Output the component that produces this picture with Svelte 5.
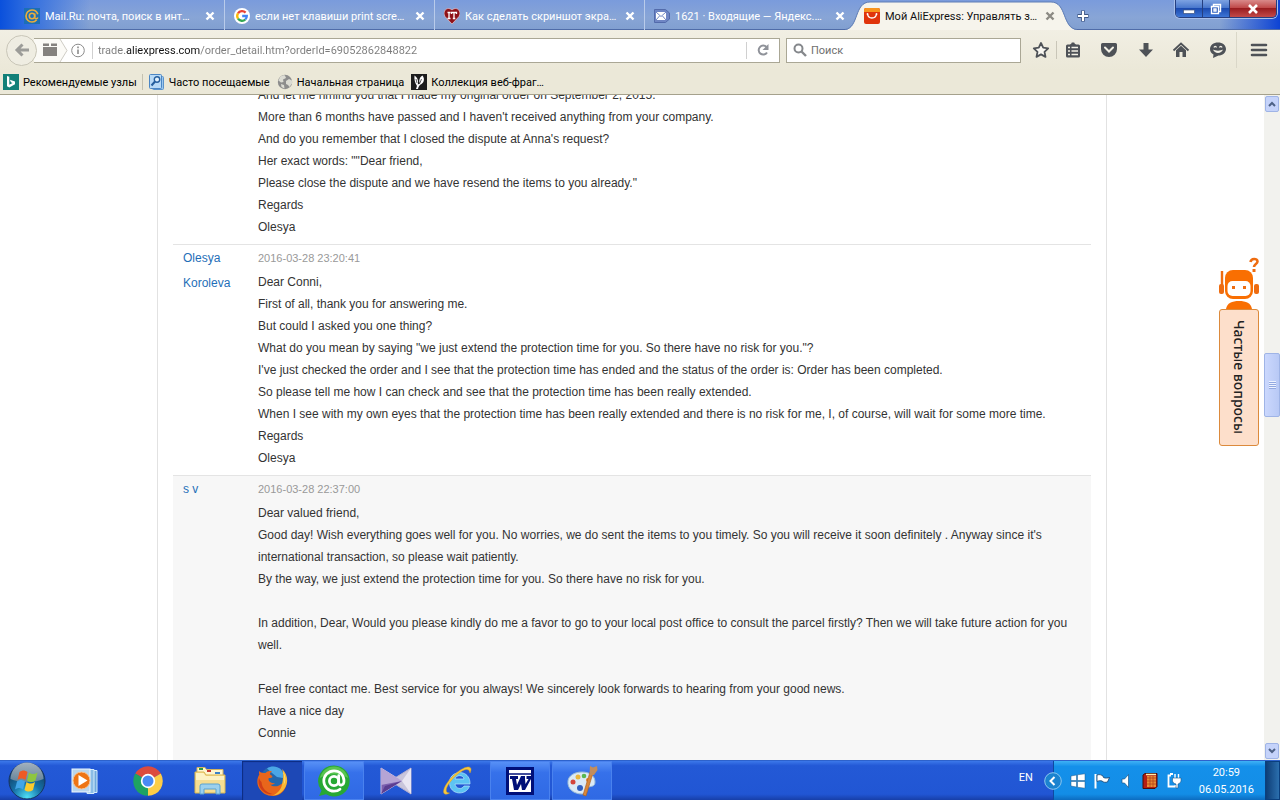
<script>
  const tabs = [
    { icon: 'mail', title: 'Mail.Ru: почта, поиск в инт…' },
    { icon: 'google', title: 'если нет клавиши print scre…' },
    { icon: 'it', title: 'Как сделать скриншот экра…' },
    { icon: 'yandex', title: '1621 · Входящие — Яндекс.…' },
    { icon: 'ali', title: 'Мой AliExpress: Управлять з…', active: true }
  ];

  const bookmarks = [
    { icon: 'bing', title: 'Рекомендуемые узлы' },
    { icon: 'folder', title: 'Часто посещаемые' },
    { icon: 'globe', title: 'Начальная страница' },
    { icon: 'leaf', title: 'Коллекция веб-фраг…' }
  ];

  const tools = ['star', 'list', 'pocket', 'download', 'home', 'chat', 'menu'];

  const messages = [
    {
      author: '',
      time: '',
      lines: [
        'And let me rimind you that I made my original order on September 2, 2015.',
        "More than 6 months have passed and I haven't received anything from your company.",
        "And do you remember that I closed the dispute at Anna's request?",
        'Her exact words: ""Dear friend,',
        'Please close the dispute and we have resend the items to you already."',
        'Regards',
        'Olesya'
      ]
    },
    {
      author: 'Olesya Koroleva',
      time: '2016-03-28 23:20:41',
      lines: [
        'Dear Conni,',
        'First of all, thank you for answering me.',
        'But could I asked you one thing?',
        'What do you mean by saying "we just extend the protection time for you. So there have no risk for you."?',
        "I've just checked the order and I see that the protection time has ended and the status of the order is: Order has been completed.",
        'So please tell me how I can check and see that the protection time has been really extended.',
        'When I see with my own eyes that the protection time has been really extended and there is no risk for me, I, of course, will wait for some more time.',
        'Regards',
        'Olesya'
      ]
    },
    {
      author: 's v',
      time: '2016-03-28 22:37:00',
      seller: true,
      lines: [
        'Dear valued friend,',
        "Good day! Wish everything goes well for you. No worries, we do sent the items to you timely. So you will receive it soon definitely . Anyway since it's international transaction, so please wait patiently.",
        'By the way, we just extend the protection time for you. So there have no risk for you.',
        '',
        'In addition, Dear, Would you please kindly do me a favor to go to your local post office to consult the parcel firstly? Then we will take future action for you well.',
        '',
        'Feel free contact me. Best service for you always! We sincerely look forwards to hearing from your good news.',
        'Have a nice day',
        'Connie'
      ]
    }
  ];

  const apps = [
    { icon: 'wmp', label: 'Media Player' },
    { icon: 'chrome', label: 'Chrome' },
    { icon: 'explorer', label: 'Explorer' },
    { icon: 'firefox', label: 'Firefox', state: 'current' },
    { icon: 'agent', label: 'Agent', state: 'open' },
    { icon: 'km', label: 'KMPlayer' },
    { icon: 'ie', label: 'Internet Explorer' },
    { icon: 'word', label: 'Word', state: 'open' },
    { icon: 'paint', label: 'Paint', state: 'open' }
  ];

  let url = $state('trade.aliexpress.com/order_detail.htm?orderId=69052862848822');
  let query = $state('');
</script>

{#snippet favicon(name)}
  <svg class="fav" viewBox="0 0 16 16" aria-hidden="true">
    {#if name === 'mail'}
      <rect width="16" height="16" fill="#1c6fb5" />
      <circle cx="8" cy="8" r="6" fill="none" stroke="#e9ad3c" stroke-width="1.7" stroke-dasharray="31 7" stroke-dashoffset="-4" />
      <circle cx="8" cy="8" r="2.7" fill="none" stroke="#e9ad3c" stroke-width="1.6" />
      <path d="M10.8 5.5v4c0 1.600 2.600 1.600 3.100 0" fill="none" stroke="#e9ad3c" stroke-width="1.400" />
    {:else if name === 'google'}
      <circle cx="8" cy="8" r="8" fill="#fff" />
      <g fill="none" stroke-width="2.300">
        <path d="M11.600 4.600A4.800 4.800 0 0 0 4 5.400" stroke="#ea4335" />
        <path d="M4 5.400a4.800 4.800 0 0 0 0 5.200" stroke="#fbbc05" />
        <path d="M4 10.600a4.800 4.800 0 0 0 7.300.9" stroke="#34a853" />
        <path d="M11.300 11.500A4.800 4.800 0 0 0 12.800 8H8.200" stroke="#4285f4" />
      </g>
    {:else if name === 'it'}
      <path d="M8 16 1 8.500C-1.500 4 1.500.5 4.500.5 6.500.5 8 2 8 2s1.500-1.500 3.500-1.500C14.500.5 17.500 4 15 8.500z" fill="#8e1218" stroke="#e9c9cf" stroke-width=".7" />
      <path d="M3.500 4.500h3M5 4.500v6M3.500 10.500h3M7.500 6V4.500h5V6M10 4.500v6M8.800 10.500h2.500" fill="none" stroke="#fff" stroke-width="1.300" />
    {:else if name === 'yandex'}
      <path d="M.5 1.500h11L15.500 5v6l-4 3.500H.5z" fill="#6f86c4" stroke="#536bab" />
      <rect x="2" y="4" width="10" height="8" fill="#fff" />
      <path d="m2 4 5 4.500L12 4M2 12l3.500-4M12 12 8.500 8" fill="none" stroke="#6f86c4" />
    {:else if name === 'ali'}
      <rect width="16" height="16" rx="2" fill="#e0340c" />
      <path d="M0 4V2a2 2 0 0 1 2-2h12a2 2 0 0 1 2 2v2z" fill="#f8941d" />
      <path d="M3.500 6c.8 5.300 8.200 5.300 9 0" fill="none" stroke="#fff" stroke-width="1.400" />
      <circle cx="3.500" cy="6" r=".9" fill="#fff" /><circle cx="12.500" cy="6" r=".9" fill="#fff" />
    {:else if name === 'bing'}
      <rect width="16" height="16" fill="#128078" />
      <path d="m4 2 2.300.8v8l3.200-1.900-1.600-.7-1-2.500 5.100 1.800v2.700L6.300 13.500 4 12.200z" fill="#fff" />
    {:else if name === 'folder'}
      <rect x="3.500" y="2.500" width="11" height="13" rx="1" fill="#9cc7ee" stroke="#5a92cb" />
      <rect x=".5" y=".5" width="12" height="14" rx="1" fill="#b8daf6" stroke="#4b86c4" />
      <circle cx="8" cy="5.500" r="2.700" fill="#e4f2fd" stroke="#255f9e" stroke-width="1.400" />
      <path d="m6 7.500-3.500 4" stroke="#255f9e" stroke-width="2" />
    {:else if name === 'globe'}
      <circle cx="8" cy="8" r="7.200" fill="#8d8d8d" />
      <path d="M3 3c2-2 4-2 5-1.500L9 4 6 5.500 6.500 8 4 8.500 1.500 6.500zM9 7l3-2 3 1.500v3L12.500 13 11 11 9 10zM4 10l3 1 .5 3.500L4.500 13z" fill="#dcdcd4" />
    {:else}
      <rect width="16" height="16" fill="#1c1c1c" />
      <path d="M3.500 1.500C7 4 7.500 7 6.800 10.500L9 9.500C7.500 7 8.500 3 11.500 1.500c2.500 3 1.500 7-1 8.500C8.500 11 7.500 12.500 7 15H5c.5-1.500 1-2.500.8-3.500C4 9 3 5 3.500 1.500z" fill="#fff" />
      <path d="M10.500 5 8.700 9.500M5 5l1 4" stroke="#1c1c1c" stroke-width=".7" />
    {/if}
  </svg>
{/snippet}

{#snippet toolIcon(name)}
  <svg viewBox="0 0 18 18" width="18" height="18" aria-hidden="true">
    {#if name === 'star'}
      <path d="m9 2 2.200 4.700 5 .6-3.700 3.500 1 5.100L9 13.400l-4.500 2.500 1-5.100L1.800 7.300l5-.6z" fill="#f8f7f1" stroke="#4e5257" stroke-width="1.800" stroke-linejoin="round" />
    {:else if name === 'list'}
      <rect x="2" y="3.500" width="14" height="13" rx="1.500" fill="#4e5257" />
      <path d="M6 4c0-1 1.500-1 1.800-2.500h2.400C10.500 3 12 3 12 4z" fill="#4e5257" />
      <path d="M4 6.500h2M7.500 6.500H14M4 10h2M7.500 10H14M4 13.500h2M7.500 13.500H14" stroke="#f3f1e6" stroke-width="1.700" />
    {:else if name === 'pocket'}
      <path d="M2.500 2h13A1.500 1.500 0 0 1 17 3.500V8a8 8 0 0 1-16 0V3.500A1.500 1.500 0 0 1 2.500 2z" fill="#4e5257" />
      <path d="m5 6.500 4 4 4-4" fill="none" stroke="#f3f1e6" stroke-width="2" stroke-linecap="round" />
    {:else if name === 'download'}
      <path d="M6.500 2h5v6.500H16L9 16 2 8.500h4.500z" fill="#4e5257" />
    {:else if name === 'home'}
      <path d="m1.500 9.500 7.500-7 7.500 7" fill="none" stroke="#4e5257" stroke-width="1.800" />
      <path d="M4 9.300 9 4.700l5 4.600V16h-3.500v-5h-3v5H4z" fill="#4e5257" />
    {:else if name === 'chat'}
      <path d="M9 1.500c4.500 0 8 2.700 8 6.500s-3.500 6.500-7.500 6.500L4 17l.5-3.500C2.300 12.300 1 10.500 1 8c0-3.800 3.500-6.500 8-6.500z" fill="#4e5257" />
      <path d="M4 8.500c1.500 4.500 8.500 4.500 10 0-2.500 1.500-7.500 1.500-10 0z" fill="#f3f1e6" />
      <path d="M5 6.500c.5-1.500 2-1.500 2.500 0M10.500 6.500c.5-1.500 2-1.500 2.500 0" fill="none" stroke="#f3f1e6" stroke-width="1.300" />
    {:else}
      <path d="M2 4h14M2 9h14M2 14h14" stroke="#4e5257" stroke-width="2.600" stroke-linecap="round" />
    {/if}
  </svg>
{/snippet}

{#snippet appIcon(name)}
  <svg viewBox="0 0 32 32" width="32" height="32" aria-hidden="true">
    {#if name === 'wmp'}
      <path d="M20 5.500h7v22h-7z" fill="#6fa9dc" stroke="#d4ebfb" />
      <path d="M17 4.500h7v24h-7z" fill="#8bbde6" stroke="#d4ebfb" />
      <rect x="2" y="4" width="18" height="23" fill="#b9d6ee" stroke="#eef7fe" />
      <circle cx="11.500" cy="15.500" r="8.500" fill="#ee7414" stroke="#f9c493" />
      <path d="m8.500 10 9 5.500-9 5.500z" fill="#fff" />
    {:else if name === 'chrome'}
      <path d="M16 16 3.200 8.600A14.800 14.800 0 0 1 28.800 8.600z" fill="#dc4b3e" />
      <path d="M16 16 3.200 8.600A14.800 14.800 0 0 0 16 30.800z" fill="#1ea362" />
      <path d="M16 16h0L28.800 8.600A14.800 14.800 0 0 1 16 30.800z" fill="#fdcd47" />
      <path d="M16 9h12.900l-.2-.5L16 5z" fill="#dc4b3e" />
      <path d="m10 20 8-1-2 11.800L22 19z" fill="#fdcd47" />
      <path d="m9.900 19.500 6 3.500-2.500 7.600c-3-.3-6-2-8-4.500z" fill="#1ea362" />
      <circle cx="16" cy="16" r="7.200" fill="#fff" /><circle cx="16" cy="16" r="5.500" fill="#4a8af4" />
    {:else if name === 'explorer'}
      <path d="M3 2.500h8l1.500 2H29v11H3z" fill="#fff5ce" stroke="#d3b460" />
      <path d="M5 3h4v2H5z" fill="#2c9a47" /><path d="M13 5h4v2h-4z" fill="#c6372c" /><path d="M21 7h5v2h-5z" fill="#3c82c8" />
      <path d="M1 7h9l2 3h19v18H1z" fill="#f6dd92" stroke="#d9b650" />
      <path d="M2 8h7.500l2 3H30v4H2z" fill="#fdf2c4" />
      <path d="M6 29v-8a2 2 0 0 1 2-2h16a2 2 0 0 1 2 2v8h-4v-5H10v5z" fill="#9cd0ee" stroke="#5ba2d1" />
    {:else if name === 'firefox'}
      <circle cx="17" cy="14" r="12.500" fill="#2468ad" />
      <path d="M11 3.500c4-3 10-2.500 13.500.5 3 3 3.500 7 2.500 9l-6-1-5-4z" fill="#4ba6e6" />
      <path d="M3 6c0 1.500 0 2.500.3 3.500C1 13 .5 18.500 3 23c2.700 5 8 8 13.500 8C24.500 31 30.500 25 30.500 17c0-2-.3-4-1-6-.5 5-3 8-6.500 9.500-3 1.500-7 1-9-1 2 .5 4 0 5-1.500-3.500 1-7-2-6.500-4.500 1-1 2.500 0 4-1.500 0-1.500-2.500-2-2.500-3s1-2 2-2.500c-3-1-5 0-6.500 1.500C7 8 5 8 3 6z" fill="#e8661b" />
      <path d="M26 4c5.500 5 6.500 12 3.500 18-2.700 5-8 8.500-13 8.500 5-2 8.500-5.500 9.500-11C27 15 28 9 26 4z" fill="#f8b833" />
      <path d="M27 7c2 4 2 9 .5 13 2.500-3.500 2.500-9-.5-13z" fill="#fde88a" />
      <path d="M3 13c-1.500 5 .5 10.500 4.500 13.500 3 2.300 6 3 9 2.500-6-1.500-10.500-5.500-11-12-1-.8-2-2.500-2.500-4z" fill="#d03e17" />
    {:else if name === 'agent'}
      <path d="M16 0.500a15.500 15.500 0 1 1-8 28.700L1 31l2.500-5.500A15.500 15.500 0 0 1 16 .5z" fill="#27a834" />
      <path d="M16 1.500A14.500 14.500 0 0 1 30 13c-8-5-20-5-28 0A14.500 14.500 0 0 1 16 1.500z" fill="#58c450" />
      <g fill="none" stroke="#fff" stroke-width="2.700">
        <circle cx="16" cy="16" r="4.600" />
        <path d="M20.700 10.500V17c0 4.500 5.300 4 5.300-1 0-6-4.500-10.200-10-10.200S5.800 10.400 5.800 16 10.400 26.200 16 26.200c2.500 0 4.500-.7 6-2" stroke-linecap="round" />
      </g>
    {:else if name === 'km'}
      <path d="M31 3v26L10 16z" fill="#c9c5db" stroke="#b4aecd" />
      <path d="m31 3-9 13 9 13z" fill="#e9e6f2" />
      <path d="M1 3v26l21-13z" fill="#7b5fae" stroke="#c9bfe2" />
      <path d="M1 3v17l21-4z" fill="#b5a4d5" />
      <path d="M1 29 22 16 5 21z" fill="#5a3d91" />
    {:else if name === 'ie'}
      <path d="M28 19H13c.5 5 7 6 9 2h5.500c-3 10-20 9.500-20-3.500C7.500 4.500 28.500 3.500 28 19zM22 14c-.6-4.500-8-4.500-9 0z" fill="#5dc3f3" stroke="#b6e5fc" stroke-width=".7" />
      <path d="M28 8c2-4 1-6.500-2.500-6C18 3 5 15 2 24c-1.500 5 1 6.500 5.500 4C2 28 4 22 9 16 15 8 27-.5 28 8z" fill="#f8c93d" stroke="#d99c22" stroke-width=".5" />
    {:else if name === 'word'}
      <rect x="2" y="2" width="28" height="28" fill="#000f78" />
      <path d="M5 5h22v22H5z" fill="#fff" />
      <path d="M5 9h22" stroke="#000f78" stroke-width="1.500" />
      <path d="M6 11h8v3h-2l1 6 4-9h4v3l.5 5 3-5h-2v-3H29v3h-2l-6 11h-3l-1-6-3 6h-4l-2-11H6z" fill="#000f78" />
    {:else}
      <path d="M16 7c8 0 13 4 13 10 0 5-4 4-6 5-3 1 0 7-7 7C8 29 1 24 2 16 2.500 11 8 7 16 7z" fill="#dbeaf6" stroke="#9dbdd8" />
      <circle cx="12" cy="12" r="2.500" fill="#e9b63f" /><circle cx="7" cy="17" r="2.500" fill="#d4453b" />
      <circle cx="18" cy="11" r="2.300" fill="#59b752" /><circle cx="14" cy="23" r="3" fill="#315fc0" />
      <circle cx="22" cy="15" r="2" fill="#e77f27" />
      <path d="M27 8 20 31l-3-1 7-23z" fill="#d98739" stroke="#a65a1d" stroke-width=".6" />
      <path d="m24 1 3 1.500L31 1l.5 4-3.500 5h-4.500z" fill="#c28d5d" />
    {/if}
  </svg>
{/snippet}

<div class="screen">
  <header>
    <div class="titlebar">
      <div class="tabs" role="tablist">
        {#each tabs as tab}
          <div class="tab" class:active={tab.active}>
            {#if tab.active}
              <svg class="shape" viewBox="0 0 232 30" preserveAspectRatio="none" aria-hidden="true">
                <path d="M0 30C14 29 9 2 25 2H206C222 2 217 29 232 30z" fill="#f6f4ec" />
                <path d="M0 29.500C14 28 9 2 25 2H206C222 2 217 28 232 29.500" fill="none" stroke="#5f7db5" stroke-width="1" />
              </svg>
            {/if}
            <button class="tab-title" role="tab" aria-selected={!!tab.active}>
              {@render favicon(tab.icon)}<span>{tab.title}</span>
            </button>
            <button class="close" aria-label="Закрыть вкладку">
              <svg viewBox="0 0 10 10" width="10" height="10"><path d="m1.500 1.500 7 7m0-7-7 7" stroke="currentColor" stroke-width="2.400" /></svg>
            </button>
          </div>
        {/each}
        <button class="plus" aria-label="Новая вкладка">
          <svg viewBox="0 0 12 12" width="12" height="12"><path d="M6 .5v11M.5 6h11" stroke="#3d5684" stroke-width="4" /><path d="M6 1v10M1 6h10" stroke="#fff" stroke-width="2.200" /></svg>
        </button>
      </div>
      <div class="window-buttons">
        <button aria-label="Свернуть"><svg viewBox="0 0 14 12" width="14" height="12"><rect x="1.500" y="7" width="11" height="3.500" fill="#fff" stroke="#3a517f" stroke-width=".7" /></svg></button>
        <button aria-label="Развернуть"><svg viewBox="0 0 14 12" width="14" height="12"><path d="M4.500 3V1.500h7v7H10M2.500 3.500h7v7h-7zM5 6h2v2H5z" fill="none" stroke="#fff" stroke-width="1.400" /></svg></button>
        <button class="quit" aria-label="Закрыть"><svg viewBox="0 0 14 12" width="14" height="12"><path d="m3 2 8 8m0-8-8 8" stroke="#fff" stroke-width="2.600" /></svg></button>
      </div>
    </div>

    <div class="navbar">
      <button class="back" aria-label="Назад">
        <svg viewBox="0 0 16 16" width="16" height="16"><path d="M15 8H4M8.500 2.500 3 8l5.500 5.500" fill="none" stroke="#9c9c98" stroke-width="3" /></svg>
      </button>
      <div class="urlbar">
        <svg class="identity" viewBox="0 0 52 23" width="52" height="23" aria-hidden="true">
          <path d="M-6 0h26l7 11.500L20 23H-6z" fill="#fbfaf6" />
          <path d="m20 0 7 11.500L20 23" fill="none" stroke="#cfcdc5" />
          <path d="M3 8h14v9H3zM3 4.500h6V7H3zM11 4.500h6V7h-6z" fill="#85827f" />
          <circle cx="38" cy="11.500" r="6.300" fill="none" stroke="#8c8c8c" />
          <path d="M38 10.500V15M38 7.500v1.700" stroke="#8c8c8c" stroke-width="1.600" />
        </svg>
        <input class="address" aria-label="Адрес" bind:value={url} />
        <button class="reload" aria-label="Обновить">
          <svg viewBox="0 0 14 14" width="14" height="14"><path d="M11 9.500A4.500 4.500 0 1 1 10.500 4" fill="none" stroke="#8f9299" stroke-width="2" /><path d="M12.500 1v6h-6z" fill="#8f9299" /></svg>
        </button>
      </div>
      <div class="search">
        <svg viewBox="0 0 14 14" width="14" height="14" aria-hidden="true"><circle cx="5.500" cy="5.500" r="4" fill="none" stroke="#85888c" stroke-width="2" /><path d="m8.500 8.500 4.500 4.500" stroke="#85888c" stroke-width="2.400" /></svg>
        <input aria-label="Поиск" placeholder="Поиск" bind:value={query} />
      </div>
      <div class="tools">
        {#each tools as tool}
          <button class={tool} aria-label={tool}>{@render toolIcon(tool)}</button>
        {/each}
      </div>
    </div>

    <nav class="bookmarks">
      {#each bookmarks as mark}
        <a href="#{mark.icon}" class={mark.icon}>{@render favicon(mark.icon)}<span>{mark.title}</span></a>
      {/each}
    </nav>
  </header>

  <div class="viewport">
    <main>
      <div class="thread">
        {#each messages as msg}
          <article class:seller={msg.seller}>
            <div class="author">{#if msg.author}<a href="#author">{msg.author}</a>{/if}</div>
            <div class="body">
              {#if msg.time}<time>{msg.time}</time>{/if}
              {#each msg.lines as line}<p>{line}</p>{/each}
            </div>
          </article>
        {/each}
      </div>
    </main>

    <aside class="faq">
      <svg viewBox="0 0 42 52" width="42" height="52" aria-hidden="true">
        <path d="M32.500 5C33 1 39.500 1 39.500 4.500c0 2.500-3.500 2.500-3.500 5.500" fill="none" stroke="#ee6c10" stroke-width="2.600" />
        <rect x="34.500" y="12" width="3" height="3" fill="#ee6c10" />
        <path d="M4 14v14" stroke="#ee6c10" stroke-width="2.400" />
        <rect x="1" y="27" width="5" height="10" rx="2" fill="#ee6c10" /><rect x="36" y="27" width="5" height="10" rx="2" fill="#ee6c10" />
        <rect x="7" y="13" width="28" height="29" rx="8" fill="#f96f02" />
        <rect x="9.500" y="24" width="23" height="15" rx="5" fill="#fff" />
        <rect x="14" y="29" width="3" height="3" fill="#ee6c10" /><rect x="25" y="29" width="3" height="3" fill="#ee6c10" />
        <path d="M8 52c1-6 6-8 13-8s12 2 13 8z" fill="#f96f02" />
      </svg>
      <button>Частые вопросы</button>
    </aside>

    <div class="scrollbar">
      <button aria-label="Вверх"><svg viewBox="0 0 8 6" width="8" height="6"><path d="m1 5 3-3 3 3" fill="none" stroke="#4d6185" stroke-width="2" /></svg></button>
      <div class="track"><div class="thumb"><i></i></div></div>
      <button aria-label="Вниз"><svg viewBox="0 0 8 6" width="8" height="6"><path d="m1 1 3 3 3-3" fill="none" stroke="#4d6185" stroke-width="2" /></svg></button>
    </div>
  </div>

  <footer>
    <button class="start" aria-label="Пуск">
      <svg viewBox="0 0 38 38" width="38" height="38">
        <defs>
          <radialGradient id="orb" cx=".5" cy=".95" r=".9"><stop offset="0" stop-color="#4fe0f5" /><stop offset=".45" stop-color="#1571a8" /><stop offset="1" stop-color="#123456" /></radialGradient>
          <linearGradient id="gloss" x2="0" y2="1"><stop offset="0" stop-color="#d5dde2" /><stop offset="1" stop-color="#7d8f9d" /></linearGradient>
        </defs>
        <circle cx="19" cy="19" r="18" fill="url(#orb)" stroke="#16335f" />
        <path d="M2.500 17a16.500 16.500 0 0 1 33 0c-8 4-25 4-33 0z" fill="url(#gloss)" opacity=".75" />
        <path d="M11.500 10c3-2 5-2 8 0l-2 8c-3-2-5-2-8 0z" fill="#ee5a24" />
        <path d="M21 10.500c3 2 5.500 2 8.500 0l-2 8c-3 2-5.500 2-8.500 0z" fill="#8ec63f" />
        <path d="M9 19.500c3-2 5-2 8 0l-2 8c-3-2-5-2-8 0z" fill="#42a5e8" />
        <path d="M18.500 20c3 2 5.500 2 8.500 0l-2 8c-3 2-5.500 2-8.500 0z" fill="#fccb2c" />
      </svg>
    </button>
    {#each apps as app}
      <button class="app {app.state ?? ''}" aria-label={app.label}>{@render appIcon(app.icon)}</button>
    {/each}
    <span class="lang">EN</span>
    <div class="tray">
      <button class="expand" aria-label="Показать скрытые значки">
        <svg viewBox="0 0 18 18" width="18" height="18"><circle cx="9" cy="9" r="8.300" fill="#1b83cf" stroke="#8ac7ef" /><path d="m10.500 5-4 4 4 4" fill="none" stroke="#fff" stroke-width="2" /></svg>
      </button>
      <svg viewBox="0 0 16 16" width="16" height="16" aria-hidden="true"><path d="m1 3 5.500-1v5.500H1zM7.500 1.800 15 .8v6.700H7.500zM1 8.500h5.500V14L1 13zM7.500 8.500H15v6.700l-7.500-1z" fill="#fff" stroke="#1d5787" stroke-width=".5" /></svg>
      <svg viewBox="0 0 16 16" width="16" height="16" aria-hidden="true"><path d="M1.500 1v14.500" stroke="#fff" stroke-width="2" /><path d="M3 2c3-1 4 0 6 1l.5 1.500c2 1 4 .5 6 0l-2 4.500c-2 .5-4 .5-5.500-1C6.500 7.500 5 7.500 3 8.500z" fill="#fff" stroke="#163f69" stroke-width=".8" /></svg>
      <svg viewBox="0 0 16 16" width="16" height="16" aria-hidden="true"><path d="M4 6h2.500L10.500 1.500v13L6.500 10H4z" fill="#fff" stroke="#1d5787" stroke-width=".7" /></svg>
      <svg viewBox="0 0 16 16" width="16" height="16" aria-hidden="true"><path d="M1 2 3 .5h12v13L13 15.500H1z" fill="#b31d14" stroke="#4a0d08" /><path d="M5 3h9v11H5z" fill="#e98b33" /><path d="M4 1.500h10" stroke="#fff0a8" stroke-width="1.500" /><path d="M5 5h9M5 8h9M5 11h9M8 3v11M11 3v11" stroke="#b2411c" stroke-width=".8" /></svg>
      <svg viewBox="0 0 16 16" width="16" height="16" aria-hidden="true"><path d="M5 2.500H2.500v11h7V12" fill="none" stroke="#fff" stroke-width="1.800" /><path d="M4 1h3" stroke="#fff" stroke-width="2" /><path d="M9 1v4M12.500 1v4" stroke="#fff" stroke-width="1.400" /><path d="M6.500 5h8.500v2.500c0 2-1.500 3-3 3.500v4h-2v-4c-2-.5-3.500-1.500-3.500-3.500z" fill="#fff" stroke="#1d5787" stroke-width=".6" /></svg>
      <div class="clock"><span>20:59</span><span>06.05.2016</span></div>
    </div>
    <button class="desktop" aria-label="Свернуть все окна"></button>
  </footer>
</div>

<style>
  :global(body) { margin: 0; }
  .screen {
    display: flex; flex-direction: column; height: 100vh; overflow: hidden;
    font-family: Roboto, "Noto Sans", sans-serif; font-size: 11px; color: #111; background: #fff;
  }
  button { border: 0; padding: 0; background: none; font: inherit; color: inherit; display: flex; align-items: center; justify-content: center; }
  input { border: 0; padding: 0; outline: 0; background: none; font: inherit; min-width: 0; }
  a { text-decoration: none; color: inherit; }
  svg { display: block; flex: none; }

  header { flex: none; background: linear-gradient(#f6f4ec, #ebe8d8 70px); border-bottom: 1px solid #a5a18c; }
  .titlebar {
    display: flex; justify-content: space-between; height: 30px; box-sizing: border-box; border-bottom: 1px solid #4f6ca8;
    background: linear-gradient(90deg, #0a50dc 0, #2b6adf 24px, transparent 90px, transparent calc(100% - 60px), #0d43d4 100%), linear-gradient(#7a9bdc, #88a5d6 60%, #819fd0);
  }
  .tabs { display: flex; padding-left: 15px; height: 30px; }
  .tab { position: relative; display: flex; align-items: center; width: 210px; box-sizing: border-box; padding: 2px 9px 0 9px; color: #fff; border-right: 1px solid #b9cbea; }
  .tab:nth-child(4), .tab.active { border-right-color: transparent; }
  .tab.active { color: #111; }
  .shape { position: absolute; left: -10px; top: 0; width: 232px; height: 30px; }
  .tab-title { position: relative; flex: 1; min-width: 0; justify-content: flex-start; gap: 5px; white-space: nowrap; overflow: hidden; }
  .fav { width: 16px; height: 16px; }
  .close { position: relative; }
  .active .close { color: #8c8a84; }
  .plus { margin-left: 12px; padding-top: 2px; }
  .window-buttons { display: flex; height: 18px; margin-right: 3px; border: 1px solid #253f80; border-top: 0; border-radius: 0 0 5px 5px; overflow: hidden; box-shadow: 0 0 0 1px #a8bfea; box-sizing: border-box; }
  .window-buttons button { width: 27px; background: linear-gradient(#7da2e2, #4a78cd 45%, #1c4bb0 50%, #3c75d6); border-right: 1px solid #253f80; }
  .window-buttons .quit { width: 46px; border: 0; background: linear-gradient(#d98a8a, #c04a4a 45%, #9a1d20 50%, #c24a48); }

  .navbar { display: flex; align-items: center; height: 40px; padding-left: 6px; }
  .back { position: relative; flex: none; width: 31px; height: 31px; border: 1px solid #c9c6b8; border-radius: 50%; background: #efede2; box-sizing: border-box; }
  .urlbar { flex: 1; display: flex; align-items: center; height: 25px; margin-left: -3px; padding-left: 6px; box-sizing: border-box; background: #fff; border: 1px solid #aaa795; border-left: 0; }
  .identity { overflow: visible; }
  .address {
    flex: 1; height: 17px; padding-left: 5px; border-left: 1px solid #d0d0d0; color: #7b7b7b;
    background: linear-gradient(90deg, #7b7b7b 33px, #111 33px, #111 107px, #7b7b7b 107px);
    background-clip: text; -webkit-text-fill-color: transparent;
  }
  .reload { width: 33px; height: 17px; border-left: 1px solid #d0d0d0; }
  .search { display: flex; align-items: center; gap: 4px; width: 235px; height: 25px; margin-left: 6px; padding-left: 6px; box-sizing: border-box; background: #fff; border: 1px solid #aaa795; }
  .search input { flex: 1; }
  .search input::placeholder { color: #6f6f6f; opacity: 1; }
  .tools { display: flex; align-items: center; padding-left: 5px; }
  .tools button { width: 36px; height: 18px; box-sizing: border-box; }
  .tools .star { width: 31px; border-right: 1px solid #c9c6b8; }
  .tools .list { width: 31px; }
  .tools .pocket { width: 41px; }
  .tools .download { width: 34px; }
  .tools .chat { width: 37px; }
  .tools .menu { width: 44px; height: 36px; border-left: 1px solid #dad7c8; }

  .bookmarks { display: flex; align-items: center; height: 24px; padding-left: 3px; color: #000; }
  .bookmarks a { display: flex; align-items: center; gap: 4px; white-space: nowrap; padding-right: 7px; }
  .bookmarks .bing { padding-right: 5px; border-right: 1px solid #c4c1b0; margin-right: 6px; }

  .viewport { position: relative; flex: 1; min-height: 0; display: flex; background: #fff; }
  main { flex: 1; min-width: 0; overflow: hidden; font-family: "Liberation Sans", Arial, sans-serif; font-size: 12px; color: #333; }
  .thread { box-sizing: border-box; max-width: 950px; margin: -11px auto 0; padding: 0 15px; border: solid #e2e2e2; border-width: 0 1px; }
  article { display: flex; padding-bottom: 6px; }
  article + article { padding-top: 1px; border-top: 1px solid #e4e4e4; }
  .seller { background: #f7f7f7; padding-bottom: 40px; }
  .author { flex: none; width: 65px; padding-left: 10px; box-sizing: border-box; margin-right: 20px; line-height: 25px; color: #1f6fb8; }
  .body { flex: 1; min-width: 0; padding-right: 10px; }
  time { display: block; line-height: 25px; font-size: 11px; color: #999; }
  p { margin: 0; line-height: 22px; min-height: 22px; }

  .faq { position: absolute; right: 20px; top: 162px; display: flex; flex-direction: column; align-items: center; }
  .faq button { writing-mode: vertical-rl; box-sizing: border-box; width: 40px; height: 137px; border: 1px solid #dc8a3c; border-radius: 3px; background: #fddfcb; font-family: "Noto Sans", sans-serif; font-size: 14px; font-weight: 500; color: #222; }

  .scrollbar { flex: none; display: flex; flex-direction: column; width: 16px; background: #f2f2ee; }
  .scrollbar button { height: 16px; margin: 1px; border: 1px solid #9fb4e6; border-radius: 2px; background: #c5d3fa; box-sizing: border-box; }
  .track { flex: 1; display: flex; flex-direction: column; }
  .track::before { content: ""; flex: 241; }
  .track::after { content: ""; flex: 326; }
  .thumb { flex: 62; display: flex; align-items: center; justify-content: center; border: 1px solid #9fb4e6; border-radius: 2px; background: linear-gradient(90deg, #cbd8fd, #b8c9f5); }
  .thumb i { width: 7px; height: 8px; background: repeating-linear-gradient(#eef3ff 0 1px, #93a9e0 1px 2px); }

  footer { flex: none; display: flex; gap: 2px; height: 40px; box-sizing: border-box; border-top: 1px solid #2d62cc; background: linear-gradient(#3c78ea, #2359d6 12%, #2156d4 85%, #173fa8); }
  .start { width: 54px; }
  .app { width: 60px; box-sizing: border-box; }
  .app.open { background: linear-gradient(#5a93f7, #3671ea 30%, #2f69e4); box-shadow: inset 0 0 0 1px #4a82ee; }
  .app.current { background: #1d48b6; box-shadow: inset 1px 1px 1px #0d2c80; }
  .lang { margin-left: auto; padding-right: 18px; line-height: 34px; color: #fff; }
  .tray { display: flex; align-items: center; gap: 8px; background: linear-gradient(#3fb2f5, #1490ea 14%, #138de6 85%, #0c6cc0); border-left: 1px solid #0e4aa0; padding-right: 11px; }
  .expand { margin-left: -10px; }
  .clock { display: flex; flex-direction: column; align-items: center; line-height: 17px; padding-left: 9px; color: #fff; }
  .desktop { width: 15px; margin-left: -2px; border: 1px solid #0a3f7e; background: linear-gradient(90deg, #0d3d76, #2b6fae); box-sizing: border-box; }
</style>
